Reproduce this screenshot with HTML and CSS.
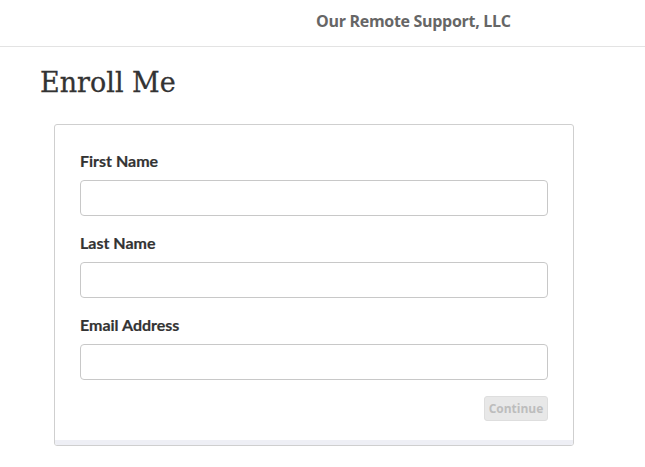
FILE: index.html
```html
<!DOCTYPE html>
<html>
<head>
<meta charset="utf-8">
<link rel="stylesheet" href="styles.css">
</head>
<body>
<header class="topbar">
  <span class="brand">Our Remote Support, LLC</span>
</header>
<main class="main">
  <h1 class="title">Enroll Me</h1>
  <div class="card">
    <form class="form">
      <div class="field">
        <label class="label">First Name</label>
        <input class="input" type="text">
      </div>
      <div class="field">
        <label class="label">Last Name</label>
        <input class="input" type="text">
      </div>
      <div class="field">
        <label class="label">Email Address</label>
        <input class="input" type="email">
      </div>
      <div class="actions">
        <button class="btn" type="button" disabled>Continue</button>
      </div>
    </form>
    <div class="card-foot"></div>
  </div>
</main>
</body>
</html>
```

FILE: styles.css
```css
html, body {
  margin: 0;
  padding: 0;
  background: #fff;
}
body {
  font-family: Lato, "Open Sans", sans-serif;
  color: #333;
}
.topbar {
  height: 46px;
  border-bottom: 1px solid #e3e3e3;
  display: flex;
  align-items: center;
  padding-left: 316px;
  box-sizing: content-box;
}
.brand {
  font-family: "Open Sans", sans-serif;
  font-weight: 700;
  font-size: 16px;
  color: #666;
  letter-spacing: -0.3px;
  position: relative;
  top: -2px;
}
.main {
  padding-left: 40px;
}
.title {
  font-family: "DejaVu Serif", serif;
  font-weight: 400;
  font-size: 27px;
  line-height: 36px;
  margin: 0;
  padding-top: 18px;
  color: #333;
  height: 59px;
  -webkit-text-stroke: 0.3px #333;
}
.card {
  margin-left: 14px;
  width: 520px;
  box-sizing: border-box;
  border: 1px solid #cfcfcf;
  border-radius: 3px;
  overflow: hidden;
}
.form {
  padding: 25px 25px 19px 25px;
}
.field {
  margin-bottom: 16px;
}
.field:last-of-type {
  margin-bottom: 15px;
}
.label {
  display: block;
  font-weight: 700;
  font-size: 16px;
  line-height: 22px;
  margin-bottom: 8px;
  color: #333;
  -webkit-text-stroke: 0.2px #333;
}
.input {
  display: block;
  width: 468px;
  height: 36px;
  box-sizing: border-box;
  border: 1px solid #c8c8c8;
  border-radius: 4px;
  margin: 0;
  padding: 0 10px;
  background: #fff;
}
.actions {
  display: flex;
  justify-content: flex-end;
}
.btn {
  font-family: "Open Sans", sans-serif;
  font-weight: 700;
  font-size: 12px;
  height: 25px;
  width: 64px;
  padding: 0;
  border: 1px solid #dedede;
  border-radius: 3px;
  background: #e8e8e8;
  color: #bdbdbd;
}
.card-foot {
  height: 5px;
  background: #eeeff5;
}
```
